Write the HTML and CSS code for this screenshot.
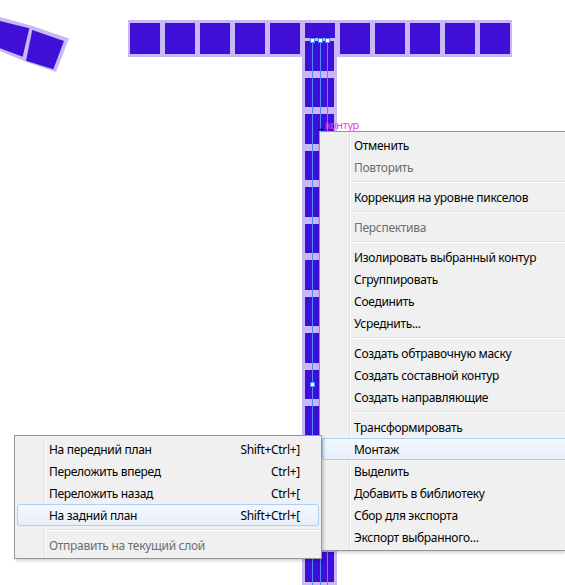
FILE: index.html
```html
<!DOCTYPE html>
<html lang="ru">
<head>
<meta charset="utf-8">
<title>Монтаж</title>
<link rel="stylesheet" href="styles.css">
</head>
<body>
<div class="artboard">
  <!-- curved row of cells, top left -->
  <svg class="arc" width="80" height="80" viewBox="0 0 80 80">
    <polygon class="arc-band" points="0,17 31,25.5 69,38.5 56,72 25,61.5 0,51"/>
    <polygon class="arc-cell" points="0,21 29.3,28.3 22.7,56.7 0,48.3"/>
    <polygon class="arc-cell" points="32.3,30 64,41 53.3,69.3 26,60.7"/>
  </svg>

  <!-- horizontal row of cells -->
  <div class="bar">
    <span class="cell"></span><span class="cell"></span><span class="cell"></span>
    <span class="cell"></span><span class="cell"></span><span class="cell"></span>
    <span class="cell"></span><span class="cell"></span><span class="cell"></span>
    <span class="cell"></span><span class="cell"></span>
  </div>

  <!-- selected vertical column of cells -->
  <div class="column">
    <span class="vcell"></span><span class="vcell"></span><span class="vcell"></span>
    <span class="vcell"></span><span class="vcell"></span><span class="vcell"></span>
    <span class="vcell"></span><span class="vcell"></span><span class="vcell"></span>
    <span class="vcell"></span><span class="vcell"></span><span class="vcell"></span>
    <span class="vcell"></span><span class="vcell"></span><span class="vcell"></span>
    <i class="guide guide-a"></i>
    <i class="guide guide-b"></i>
    <i class="guide guide-c"></i>
    <i class="anchor anchor-a"></i>
    <i class="anchor anchor-b"></i>
    <i class="anchor anchor-c"></i>
    <i class="anchor anchor-mid"></i>
  </div>

  <div class="smart-hint"><i class="hint-mark"></i>контур</div>
</div>

<!-- context menu -->
<ul class="menu main-menu">
  <li class="item">Отменить</li>
  <li class="item disabled">Повторить</li>
  <li class="sep"></li>
  <li class="item">Коррекция на уровне пикселов</li>
  <li class="sep"></li>
  <li class="item disabled">Перспектива</li>
  <li class="sep"></li>
  <li class="item">Изолировать выбранный контур</li>
  <li class="item">Сгруппировать</li>
  <li class="item">Соединить</li>
  <li class="item">Усреднить...</li>
  <li class="sep"></li>
  <li class="item">Создать обтравочную маску</li>
  <li class="item">Создать составной контур</li>
  <li class="item">Создать направляющие</li>
  <li class="sep"></li>
  <li class="item">Трансформировать</li>
  <li class="item active">Монтаж</li>
  <li class="item">Выделить</li>
  <li class="item">Добавить в библиотеку</li>
  <li class="item">Сбор для экспорта</li>
  <li class="item">Экспорт выбранного...</li>
</ul>

<!-- "Монтаж" submenu -->
<ul class="menu sub-menu">
  <li class="item"><span>На передний план</span><span class="key">Shift+Ctrl+]</span></li>
  <li class="item"><span>Переложить вперед</span><span class="key">Ctrl+]</span></li>
  <li class="item"><span>Переложить назад</span><span class="key">Ctrl+[</span></li>
  <li class="item active"><span>На задний план</span><span class="key">Shift+Ctrl+[</span></li>
  <li class="sep"></li>
  <li class="item disabled"><span>Отправить на текущий слой</span></li>
</ul>
</body>
</html>
```

FILE: styles.css
```css
html, body {
  margin: 0;
  padding: 0;
  background: #fff;
}

body {
  position: relative;
  width: 565px;
  height: 585px;
  overflow: hidden;
  font-family: "Noto Sans", "Open Sans", sans-serif;
}

.artboard {
  position: absolute;
  inset: 0;
}

/* ---------- shapes on the canvas ---------- */

.arc {
  position: absolute;
  left: 0;
  top: 0;
}

.arc-band { fill: #c8b9f6; }
.arc-cell { fill: #3f0fd8; }

.bar {
  position: absolute;
  left: 128px;
  top: 20px;
  display: flex;
  gap: 5px;
  padding: 3px 2px;
  background: #c8b9f6;
}

.cell {
  width: 30px;
  height: 31px;
  background: #3f0fd8;
}

.column {
  position: absolute;
  left: 302px;
  top: 38px;
  width: 35px;
  height: 547px;
  box-sizing: border-box;
  overflow: hidden;
  display: flex;
  flex-direction: column;
  gap: 7px;
  padding: 3px 3px 0;
  background: #c8b9f6;
}

.vcell {
  flex: none;
  height: 29.5px;
  background: #3f0fd8;
}

/* selection guides of the column */
.guide {
  position: absolute;
  top: 1px;
  bottom: 0;
  width: 1px;
  background: #4d8cff;
}
.guide-a { left: 10px; }
.guide-b { left: 18px; }
.guide-c { left: 25px; }

.anchor {
  position: absolute;
  width: 3px;
  height: 3px;
  background: #fff;
  border: 1px solid #4d8cff;
}
.anchor-a { left: 8px;  top: 0; }
.anchor-b { left: 16px; top: 0; }
.anchor-c { left: 23px; top: 0; }
.anchor-mid { left: 8px; top: 344px; }

/* smart guide label */
.smart-hint {
  position: absolute;
  left: 325px;
  top: 118px;
  font-size: 11px;
  line-height: 14px;
  letter-spacing: -0.4px;
  color: #f23cf2;
}

.hint-mark {
  position: absolute;
  left: -7px;
  top: 11px;
  width: 5px;
  height: 1px;
  background: #000;
}
.hint-mark::before {
  content: "";
  position: absolute;
  left: 3px;
  top: -1px;
  width: 1px;
  height: 3px;
  background: #000;
}

/* ---------- context menus ---------- */

.menu {
  position: absolute;
  margin: 0;
  padding: 2px;
  list-style: none;
  box-sizing: border-box;
  border: 1px solid #979797;
  background:
    linear-gradient(to right,
      transparent 29px,
      #e2e3e3 29px, #e2e3e3 30px,
      #ffffff 30px, #ffffff 31px,
      transparent 31px),
    #f0f0f0;
  font-size: 12px;
  letter-spacing: -0.3px;
  color: #000;
  box-shadow: 2px 2px 3px rgba(0, 0, 0, 0.18);
}

/* runs off the right side of the window */
.main-menu {
  left: 319px;
  top: 131px;
  width: 246px;
  border-right: none;
  padding-right: 0;
  box-shadow: 0 2px 3px rgba(0, 0, 0, 0.18);
}

.sub-menu {
  left: 14px;
  top: 435px;
  width: 308px;
}

.item {
  display: flex;
  align-items: center;
  height: 22px;
  box-sizing: border-box;
  padding: 0 18px 0 31px;
  border: 1px solid transparent;
  border-radius: 3px;
  white-space: nowrap;
}

.main-menu .item.active {
  border-right: none;
  border-radius: 3px 0 0 3px;
}

.item.disabled {
  color: #6d6d6d;
}

.item.active {
  border-color: #aecff7;
  background: linear-gradient(#f4f8fd, #e6eefa);
}

.key {
  margin-left: auto;
}

.sep {
  height: 8px;
  display: flex;
  align-items: center;
  padding-left: 29px;
}
.sep::before {
  content: "";
  flex: 1;
  border-top: 1px solid #e0e0e0;
  border-bottom: 1px solid #fff;
}
```
